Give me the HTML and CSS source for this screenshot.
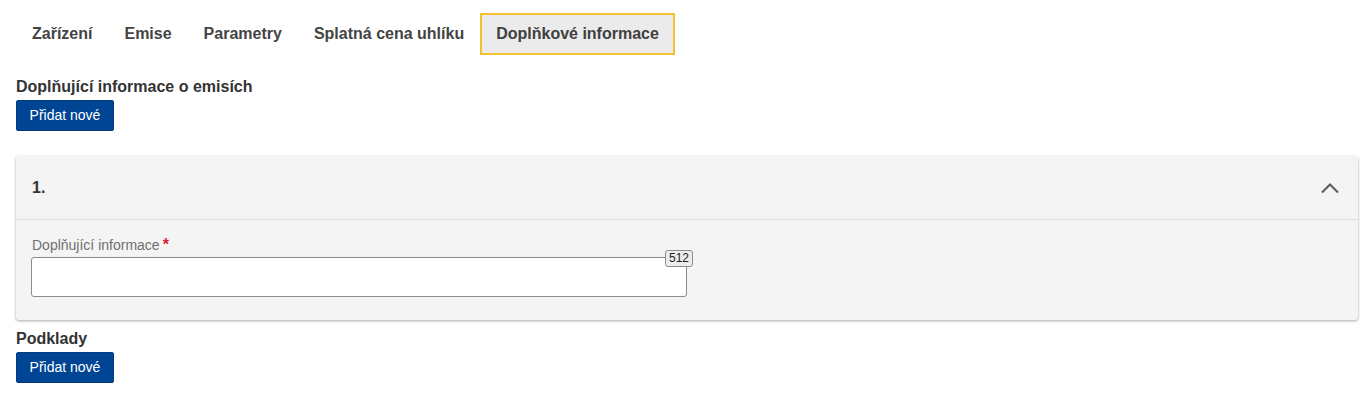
FILE: index.html
```html
<!DOCTYPE html>
<html lang="cs">
<head>
<meta charset="utf-8">
<title>Doplňkové informace</title>
<link rel="stylesheet" href="styles.css">
</head>
<body>
<div class="page">
  <nav class="tabs">
    <a class="tab">Zařízení</a>
    <a class="tab">Emise</a>
    <a class="tab">Parametry</a>
    <a class="tab">Splatná cena uhlíku</a>
    <a class="tab tab-active">Doplňkové informace</a>
  </nav>

  <section class="section">
    <h2 class="section-title">Doplňující informace o emisích</h2>
    <button class="btn">Přidat nové</button>
  </section>

  <div class="card">
    <div class="card-header">
      <span class="card-title">1.</span>
      <svg class="chevron" width="24" height="24" viewBox="0 0 24 24"><polyline points="4,16.5 12,8.5 20,16.5" fill="none" stroke="#5a5a5a" stroke-width="2"/></svg>
    </div>
    <div class="card-body">
      <label class="field-label">Doplňující informace<span class="req">*</span></label>
      <div class="field">
        <textarea class="textarea"></textarea>
        <span class="counter">512</span>
      </div>
    </div>
  </div>

  <section class="section section-second">
    <h2 class="section-title">Podklady</h2>
    <button class="btn">Přidat nové</button>
  </section>
</div>
</body>
</html>
```

FILE: styles.css
```css
* { box-sizing: border-box; }
html, body { margin: 0; padding: 0; background: #fff; }
body { font-family: "Liberation Sans", Arial, sans-serif; color: #333; }

.page { padding: 13px 9px 0 16px; }

.tabs { display: flex; }
.tab {
  font-size: 16px;
  font-weight: bold;
  line-height: 18px;
  color: #444;
  padding: 10px 14px;
  border: 2px solid transparent;
  cursor: pointer;
}
.tab-active {
  background: #ebebeb;
  border-color: #f5c12e;
  color: #404040;
}

.section { margin-top: 22px; }
.section-second { margin-top: 9px; }
.section-title {
  margin: 0 0 3px;
  font-size: 16px;
  line-height: 20px;
  font-weight: bold;
  color: #333;
}
.btn {
  display: block;
  font-family: "Liberation Sans", Arial, sans-serif;
  font-size: 14px;
  line-height: 17px;
  color: #fff;
  background: #004494;
  border: 1px solid #003a80;
  border-radius: 2px;
  padding: 6px 12px;
  height: 31px;
  width: 98px;
}

.card {
  margin-top: 25px;
  background: #f4f4f4;
  border-radius: 3px;
  box-shadow: 0 1px 3px rgba(0,0,0,0.35);
}
.card-header {
  display: flex;
  align-items: center;
  justify-content: space-between;
  height: 64px;
  padding: 0 16px;
  border-bottom: 1px solid #dedede;
}
.card-title { font-size: 16px; font-weight: bold; color: #333; line-height: 20px; }
.chevron { display: block; }

.card-body { padding: 16px 15px 23px; }
.field-label {
  display: block;
  font-size: 14px;
  line-height: 18px;
  color: #707070;
  padding-left: 1px;
}
.req { color: #d9222f; font-weight: bold; margin-left: 3px; font-size: 16px; }
.field { position: relative; width: 50%; margin-top: 3px; }
.textarea {
  display: block;
  width: 100%;
  height: 40px;
  border: 1px solid #8c8c8c;
  border-radius: 3px;
  background: #fff;
  resize: none;
  font-family: "Liberation Sans", Arial, sans-serif;
}
.counter {
  position: absolute;
  top: -7px;
  right: -6px;
  height: 17px;
  padding: 0 3px;
  font-size: 12px;
  line-height: 15px;
  color: #222;
  background: #ececec;
  border: 1px solid #8c8c8c;
  border-radius: 3px;
}
```
